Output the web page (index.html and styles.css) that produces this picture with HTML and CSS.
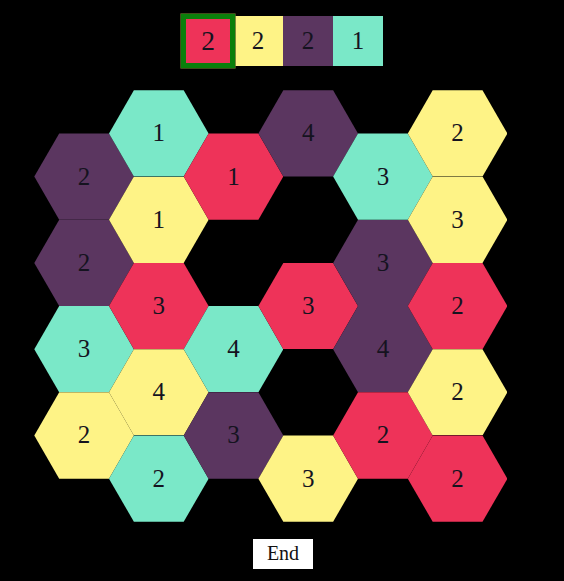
FILE: index.html
```html
<!DOCTYPE html>
<html>
<head>
    <title>Hex Puzzle</title>
    <link rel="stylesheet" href="styles.css">
</head>
<body>
    <div class="tiles">
        <div class="tile red selected">2</div>
        <div class="tile yellow">2</div>
        <div class="tile purple">2</div>
        <div class="tile teal">1</div>
    </div>

    <div class="board">
        <div class="col low">
            <div class="hex purple">2</div>
            <div class="hex purple">2</div>
            <div class="hex teal">3</div>
            <div class="hex yellow">2</div>
        </div>
        <div class="col">
            <div class="hex teal">1</div>
            <div class="hex yellow">1</div>
            <div class="hex red">3</div>
            <div class="hex yellow">4</div>
            <div class="hex teal">2</div>
        </div>
        <div class="col low">
            <div class="hex red">1</div>
            <div class="hex empty"></div>
            <div class="hex teal">4</div>
            <div class="hex purple">3</div>
        </div>
        <div class="col">
            <div class="hex purple">4</div>
            <div class="hex empty"></div>
            <div class="hex red">3</div>
            <div class="hex empty"></div>
            <div class="hex yellow">3</div>
        </div>
        <div class="col low">
            <div class="hex teal">3</div>
            <div class="hex purple">3</div>
            <div class="hex purple">4</div>
            <div class="hex red">2</div>
        </div>
        <div class="col">
            <div class="hex yellow">2</div>
            <div class="hex yellow">3</div>
            <div class="hex red">2</div>
            <div class="hex yellow">2</div>
            <div class="hex red">2</div>
        </div>
    </div>

    <div class="controls">
        <button class="end">End</button>
    </div>
</body>
</html>
```

FILE: styles.css
```css
body {
    margin: 0;
    background: #000;
    font-family: "Liberation Serif", "Times New Roman", serif;
    color: #15131f;
}

.tiles {
    display: flex;
    justify-content: center;
    padding: 16px 0 0 2px;
}

.tile {
    box-sizing: border-box;
    width: 50px;
    height: 50px;
    display: flex;
    align-items: center;
    justify-content: center;
    font-size: 25px;
}

.tile.selected {
    border: 5px solid #0b7f0b;
    transform: scale(1.1);
}

.red { background: #ee3359; }
.yellow { background: #fef386; }
.purple { background: #5b3660; }
.teal { background: #7ae8c8; }

.board {
    display: flex;
    margin-top: 24.3px;
    padding-left: 34.3px;
}

.col {
    display: flex;
    flex-direction: column;
    width: 99.6px;
}

.col + .col {
    margin-left: -24.9px;
}

.col.low {
    padding-top: 43.15px;
}

.hex {
    height: 86.3px;
    display: flex;
    align-items: center;
    justify-content: center;
    font-size: 25px;
    clip-path: polygon(25% 0, 75% 0, 100% 50%, 75% 100%, 25% 100%, 0 50%);
}

.hex.empty {
    visibility: hidden;
}

.controls {
    display: flex;
    justify-content: center;
    margin-top: 17.2px;
    padding-left: 2px;
}

.end {
    width: 60px;
    height: 30px;
    background: #fff;
    border: none;
    padding: 0;
    font-family: "Liberation Serif", "Times New Roman", serif;
    font-size: 20px;
    color: #111;
}
```
